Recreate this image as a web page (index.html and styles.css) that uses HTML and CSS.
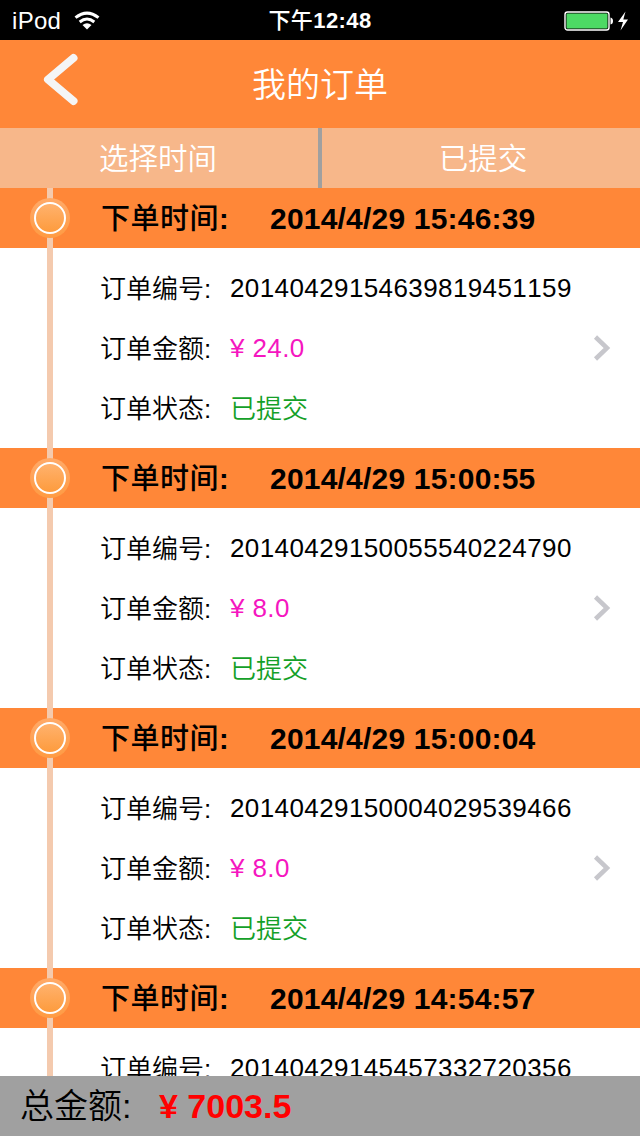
FILE: index.html
```html
<!doctype html>
<html lang="zh-CN">
<head>
	<meta charset="utf-8">
	<meta name="viewport" content="width=device-width, initial-scale=1.0">
	<title>我的订单</title>
	<link rel="stylesheet" href="styles.css">
</head>
<body>
	<div class="status">
		<div class="status-carrier">
			<span>iPod</span>
			<svg class="wifi" width="26" height="20" viewBox="0 0 26 20">
				<g fill="none" stroke="#fff" stroke-width="3">
					<path d="M1.500 6.700Q13 -2.500 24.500 6.700"/>
					<path d="M5.700 11Q13 5 20.300 11"/>
				</g>
				<path fill="#fff" d="M8.500 14Q13 10.500 17.500 14L13 18.600z"/>
			</svg>
		</div>
		<div class="status-time">下午<b>12:48</b></div>
		<div class="status-power">
			<svg width="68" height="22" viewBox="0 0 68 22">
				<rect x="1" y="2" width="44" height="18" rx="2.500" fill="#000" stroke="#fff" stroke-width="1.400"/>
				<rect x="2.500" y="3.500" width="41" height="15" rx="1" fill="#4cd964"/>
				<path fill="#fff" d="M46.500 7.500Q49 8 49 11T46.500 14.500z"/>
				<path fill="#fff" d="M61.500 1.500L54 12h5l-2.500 8.500L64 9.500h-4.700z"/>
			</svg>
		</div>
	</div>
	<div class="navbar">
		<svg class="back" width="40" height="56" viewBox="0 0 40 56">
			<path d="M33.500 7L8 28.500L33.500 50" fill="none" stroke="#f5f5f5" stroke-width="8" stroke-linecap="round" stroke-linejoin="round"/>
		</svg>
		<h1 class="title">我的订单</h1>
	</div>
	<div class="filters">
		<div class="filter">选择时间</div>
		<div class="filter">已提交</div>
	</div>
	<div class="orders">
		<div class="order">
			<div class="order-head"><i class="dot"></i><span class="order-label">下单时间<b>:</b></span><b class="order-time">2014/4/29 15:46:39</b></div>
			<div class="order-body">
				<div class="row"><span class="label">订单编号:</span><span class="number">20140429154639819451159</span></div>
				<div class="row"><span class="label">订单金额:</span><span class="price">¥ 24.0</span><svg class="arrow" width="18" height="26" viewBox="0 0 18 26"><path d="M2.500 2L14 13L2.500 24" fill="none" stroke="#c7c7cc" stroke-width="4.500"/></svg></div>
				<div class="row"><span class="label">订单状态:</span><span class="state">已提交</span></div>
			</div>
		</div>
		<div class="order">
			<div class="order-head"><i class="dot"></i><span class="order-label">下单时间<b>:</b></span><b class="order-time">2014/4/29 15:00:55</b></div>
			<div class="order-body">
				<div class="row"><span class="label">订单编号:</span><span class="number">20140429150055540224790</span></div>
				<div class="row"><span class="label">订单金额:</span><span class="price">¥ 8.0</span><svg class="arrow" width="18" height="26" viewBox="0 0 18 26"><path d="M2.500 2L14 13L2.500 24" fill="none" stroke="#c7c7cc" stroke-width="4.500"/></svg></div>
				<div class="row"><span class="label">订单状态:</span><span class="state">已提交</span></div>
			</div>
		</div>
		<div class="order">
			<div class="order-head"><i class="dot"></i><span class="order-label">下单时间<b>:</b></span><b class="order-time">2014/4/29 15:00:04</b></div>
			<div class="order-body">
				<div class="row"><span class="label">订单编号:</span><span class="number">20140429150004029539466</span></div>
				<div class="row"><span class="label">订单金额:</span><span class="price">¥ 8.0</span><svg class="arrow" width="18" height="26" viewBox="0 0 18 26"><path d="M2.500 2L14 13L2.500 24" fill="none" stroke="#c7c7cc" stroke-width="4.500"/></svg></div>
				<div class="row"><span class="label">订单状态:</span><span class="state">已提交</span></div>
			</div>
		</div>
		<div class="order">
			<div class="order-head"><i class="dot"></i><span class="order-label">下单时间<b>:</b></span><b class="order-time">2014/4/29 14:54:57</b></div>
			<div class="order-body">
				<div class="row"><span class="label">订单编号:</span><span class="number">20140429145457332720356</span></div>
			</div>
		</div>
	</div>
	<div class="total"><span class="total-label">总金额:</span><b>¥ 7003.5</b></div>
</body>
</html>
```
FILE: styles.css
```css
*,
*::before {
	box-sizing: border-box;
}
body {
	margin: 0;
	height: 1136px;
	display: flex;
	flex-direction: column;
	overflow: hidden;
	background: #fff;
	color: #000;
	font-family: "Liberation Sans", "Noto Sans CJK SC", sans-serif;
	font-size: 26px;
	font-weight: 350;
	font-kerning: none;
}
b {
	font-weight: 700;
}
svg {
	display: block;
}

.status {
	flex: none;
	height: 40px;
	display: grid;
	grid-template-columns: 1fr auto 1fr;
	align-items: center;
	padding: 0 8px 0 12px;
	background: #000;
	color: #fff;
	font-size: 24px;
	line-height: 42px;
}
.status-carrier {
	display: flex;
	align-items: center;
	gap: 13px;
}
.status-carrier span {
	letter-spacing: .3px;
}
.status-time {
	margin-left: -4px;
	font-size: 22px;
	font-weight: 500;
	letter-spacing: .4px;
}
.status-power {
	display: flex;
	justify-content: flex-end;
}

.navbar {
	flex: none;
	height: 88px;
	display: grid;
	grid-template-columns: 1fr auto 1fr;
	align-items: center;
	padding: 0 40px;
	background: #ff8738;
	color: #fff;
}
.back {
	margin-top: -10px;
}
.title {
	margin: 0;
	padding-top: 2px;
	font-size: 34px;
	font-weight: 350;
	line-height: 86px;
}

.filters {
	flex: none;
	display: flex;
	height: 60px;
	background: #f7b78a;
	color: #fff;
	font-size: 29.5px;
	line-height: 62px;
	text-align: center;
}
.filter {
	flex: 1;
	padding-left: 4px;
}
.filter:first-child {
	flex: 0 0 322px;
	padding: 0 2px 0 0;
	border-right: 4px solid #a0a0a0;
}

.orders {
	flex: 1;
	min-height: 0;
	overflow: hidden;
}
.order {
	height: 260px;
	background: linear-gradient(#f4caae, #f4caae) 47px 0 / 6px 100% no-repeat;
}
.order-head {
	height: 60px;
	display: flex;
	align-items: center;
	padding-left: 30px;
	background: linear-gradient(#f4caae, #f4caae) 47px 0 / 6px 100% no-repeat #ff8738;
	font-size: 29px;
	font-weight: 500;
	line-height: 58px;
}
.order-time {
	padding-top: 2px;
	font-size: 30px;
	letter-spacing: .2px;
}
.dot {
	width: 40px;
	height: 40px;
	padding: 4px;
	margin-right: 31px;
	border-radius: 50%;
	background: linear-gradient(#ffaa69, #ff9b43);
}
.dot::before {
	content: "";
	display: block;
	height: 32px;
	border: 2.5px solid #fff;
	border-radius: 50%;
	background: linear-gradient(#ffb370, #fd9a3a) border-box;
}
.order-label {
	width: 169px;
	padding-top: 2px;
	letter-spacing: .5px;
}
.order-body {
	padding: 10px 30px 10px 100px;
}
.row {
	display: flex;
	align-items: center;
	height: 60px;
	line-height: 60px;
}
.label {
	width: 130px;
}
.number {
	letter-spacing: .4px;
}
.price {
	color: #f516c0;
	letter-spacing: .4px;
}
.state {
	color: #14a028;
}
.label,
.state {
	padding-top: 1px;
}
.arrow {
	margin-left: auto;
	margin-right: -1px;
}

.total {
	flex: none;
	display: flex;
	height: 60px;
	padding-left: 20px;
	background: #a0a0a0;
	font-size: 34px;
	line-height: 60px;
}
.total-label {
	width: 139px;
}
.total b {
	color: #f00;
}
```
